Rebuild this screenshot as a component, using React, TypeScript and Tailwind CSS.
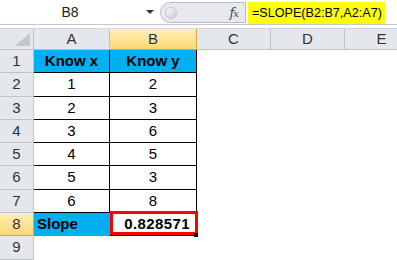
import React from 'react';

const cols = [
  { name: 'A', w: 76 },
  { name: 'B', w: 87 },
  { name: 'C', w: 74 },
  { name: 'D', w: 74 },
  { name: 'E', w: 74 },
];

const rows = [
  { n: 1, h: 23, a: 'Know x', b: 'Know y' },
  { n: 2, h: 24, a: '1', b: '2' },
  { n: 3, h: 23, a: '2', b: '3' },
  { n: 4, h: 23, a: '3', b: '6' },
  { n: 5, h: 23, a: '4', b: '5' },
  { n: 6, h: 24, a: '5', b: '3' },
  { n: 7, h: 23, a: '6', b: '8' },
  { n: 8, h: 23, a: 'Slope', b: '0.828571' },
  { n: 9, h: 24, a: '', b: '' },
];

const App: React.FC = () => {
  return (
    <div className="w-[397px] h-[260px] overflow-hidden bg-white font-['Liberation_Sans',Arial,sans-serif] text-black">
      {/* formula bar */}
      <div className="flex h-[25px] border-b border-[#c4c8cd]">
        <div className="w-[160px] flex items-center bg-white">
          <div className="w-[140px] text-center text-[14px] text-[#222]">B8</div>
          <div className="w-[20px] flex justify-center">
            <div className="w-0 h-0 border-l-[4px] border-r-[4px] border-t-[4px] border-l-transparent border-r-transparent border-t-[#333]" />
          </div>
        </div>
        <div className="w-[86px] mt-[2px] mb-[1px] flex items-center justify-between rounded-l-full border border-r-[1px] border-[#b8bcc2] bg-[#e7e9ee] pl-[4px] pr-[7px]">
          <div className="w-[12px] h-[12px] rounded-full bg-gradient-to-br from-[#fafbfc] to-[#c9ccd1] border border-[#c3c6cb]" />
          <span className="font-['DejaVu_Serif',serif] italic text-[13px] text-[#444] tracking-[-1px]">
            f<span className="text-[10px]">x</span>
          </span>
        </div>
        <div className="flex-1 flex items-end pl-[2px]">
          <div className="h-[22px] w-[137px] bg-[#ffff00] flex items-center pl-[4px] text-[12.6px] text-black whitespace-nowrap">
            =SLOPE(B2:B7,A2:A7)
          </div>
        </div>
      </div>
      <div className="h-[4px] bg-white border-b border-[#d5d8dc]" />

      {/* column headers */}
      <div className="flex h-[21px]">
        <div className="w-[34px] shrink-0 relative bg-[#e4e7eb] border-r border-b border-[#bfc3c8]">
          <div className="absolute right-[3px] bottom-[3px] w-0 h-0 border-l-[14px] border-t-[12px] border-l-transparent border-t-transparent border-b-0 border-r-0"
            style={{}} />
          <svg className="absolute right-[3px] bottom-[3px]" width="15" height="13" viewBox="0 0 15 13">
            <polygon points="15,0 15,13 0,13" fill="#c3c7cc" />
          </svg>
        </div>
        {cols.map((c) => (
          <div
            key={c.name}
            style={{ width: c.w }}
            className={
              c.name === 'B'
                ? 'shrink-0 flex items-center justify-center text-[15px] text-[#333] bg-gradient-to-b from-[#fff0b8] to-[#fcd673] border-r border-b border-[#e2a63a]'
                : 'shrink-0 flex items-center justify-center text-[15px] text-[#333] bg-[#e4e7eb] border-r border-b border-[#bfc3c8]'
            }
          >
            {c.name}
          </div>
        ))}
      </div>

      {/* rows */}
      {rows.map((r) => {
        const inTable = r.n <= 7;
        const isHead = r.n === 1;
        const isSlope = r.n === 8;
        return (
          <div key={r.n} className="flex" style={{ height: r.h }}>
            <div
              className={
                isSlope
                  ? 'w-[34px] shrink-0 flex items-center justify-center text-[15px] text-[#333] bg-gradient-to-b from-[#fff0b8] to-[#fcd673] border-r border-b border-[#e2a63a]'
                  : 'w-[34px] shrink-0 flex items-center justify-center text-[15px] text-[#333] bg-[#e4e7eb] border-r border-b border-[#bfc3c8]'
              }
            >
              {r.n}
            </div>
            {/* A */}
            <div
              className={
                isHead
                  ? 'w-[76px] shrink-0 flex items-center justify-center font-bold text-[15px] bg-[#00b0f0] border-r border-b border-black'
                  : isSlope
                  ? 'w-[76px] shrink-0 flex items-center pl-[3px] font-bold text-[15px] bg-[#00b0f0] border-r border-b border-[#00b0f0]'
                  : inTable
                  ? 'w-[76px] shrink-0 flex items-center justify-center text-[15px] border-r border-b border-black'
                  : 'w-[76px] shrink-0'
              }
            >
              {r.a}
            </div>
            {/* B */}
            <div
              className={
                isHead
                  ? 'w-[87px] shrink-0 flex items-center justify-center font-bold text-[15px] bg-[#00b0f0] border-r border-b border-black'
                  : isSlope
                  ? 'w-[87px] shrink-0 relative flex items-center justify-end pr-[6px] font-bold text-[15px] tracking-[0.4px] bg-white border-r border-b border-black'
                  : inTable
                  ? 'w-[87px] shrink-0 flex items-center justify-center text-[15px] border-r border-b border-black'
                  : 'w-[87px] shrink-0'
              }
            >
              {r.b}
              {isSlope && (
                <>
                  <div className="absolute left-0 top-[-2px] right-[-2px] bottom-0 border-[3px] border-[#ff0000]" />
                  <div className="absolute right-[-2px] bottom-[-2px] w-[4px] h-[4px] bg-black" />
                </>
              )}
            </div>
            <div className="w-[74px] shrink-0" />
            <div className="w-[74px] shrink-0" />
            <div className="w-[74px] shrink-0" />
          </div>
        );
      })}
    </div>
  );
};

export default App;
